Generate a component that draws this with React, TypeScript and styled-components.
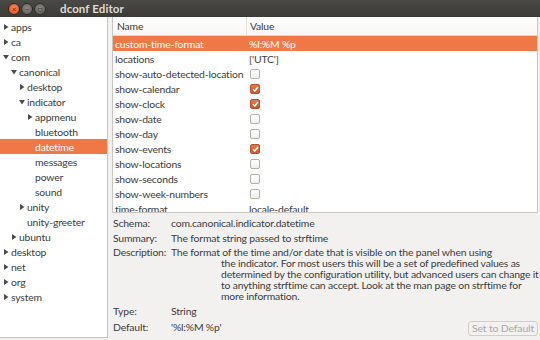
import React from "react";
import styled, { createGlobalStyle } from "styled-components";

const Global = createGlobalStyle`
  html, body { margin: 0; padding: 0; background: #f2f1f0; }
  body { font-family: Lato, "Liberation Sans", sans-serif; }
`;

const Window = styled.div`
  width: 540px;
  height: 340px;
  background: #f2f1f0;
  display: flex;
  flex-direction: column;
  overflow: hidden;
  font-family: Lato, "Liberation Sans", sans-serif;
  font-size: 10.4px;
  letter-spacing: -0.18px;
  color: #3c3c3c;
`;

const TitleBar = styled.div`
  height: 17px;
  flex: none;
  background: linear-gradient(#4a4945, #3c3b37);
  display: flex;
  align-items: center;
  padding-left: 8px;
  gap: 1px;
`;

const WinButton = styled.div<{ $close?: boolean }>`
  width: 10px;
  height: 10px;
  border-radius: 50%;
  background: ${(p) =>
    p.$close
      ? "radial-gradient(circle at 50% 40%, #f58a5f, #df4a16)"
      : "radial-gradient(circle at 50% 40%, #8a8882, #5d5b56)"};
  border: 0.5px solid #2c2b28;
  display: flex;
  align-items: center;
  justify-content: center;
  color: ${(p) => (p.$close ? "#5b1a05" : "#3c3b37")};
  font-size: 8px;
  line-height: 1;
`;

const Title = styled.div`
  margin-left: 13px;
  color: #dfdbd2;
  font-weight: bold;
  font-size: 11.5px;
  letter-spacing: 0.1px;
`;

const Body = styled.div`
  flex: 1;
  display: flex;
  gap: 4px;
  min-height: 0;
  padding: 0 2px 2px 0;
`;

const TreePanel = styled.div`
  width: 107px;
  flex: none;
  background: #ffffff;
  border-right: 1px solid #c9c6c1;
  border-bottom: 1px solid #c9c6c1;
  padding-top: 2px;
  overflow: hidden;
`;

const TreeRow = styled.div<{ $level: number; $selected?: boolean }>`
  height: 15px;
  display: flex;
  align-items: center;
  padding-left: ${(p) => 3 + p.$level * 8}px;
  background: ${(p) => (p.$selected ? "#f07746" : "transparent")};
  color: ${(p) => (p.$selected ? "#ffffff" : "#3c3c3c")};
  white-space: nowrap;
`;

const Expander = styled.span`
  width: 8px;
  flex: none;
  display: inline-flex;
  align-items: center;
`;

const RightColumn = styled.div`
  flex: 1;
  display: flex;
  flex-direction: column;
  min-width: 0;
`;

const TableBox = styled.div`
  height: 195px;
  flex: none;
  background: #ffffff;
  border: 1px solid #c9c6c1;
  border-top: none;
  overflow: hidden;
`;

const HeaderRow = styled.div`
  height: 18px;
  display: grid;
  grid-template-columns: 133px 1fr;
  border-bottom: 1px solid #dcdad5;
  background: linear-gradient(#ffffff, #f7f6f5);
`;

const HeaderCell = styled.div<{ $divider?: boolean }>`
  display: flex;
  align-items: center;
  padding-left: ${(p) => (p.$divider ? "3px" : "4px")};
  border-left: ${(p) => (p.$divider ? "1px solid #e2e0dc" : "none")};
  color: #3c3c3c;
`;

const Row = styled.div<{ $selected?: boolean }>`
  height: 15px;
  display: grid;
  grid-template-columns: 134px 1fr;
  align-items: center;
  background: ${(p) => (p.$selected ? "#f07746" : "transparent")};
  color: ${(p) => (p.$selected ? "#ffffff" : "#3c3c3c")};
  white-space: nowrap;
`;

const NameCell = styled.div`
  padding-left: 2px;
  overflow: hidden;
`;

const ValueCell = styled.div`
  padding-left: 2px;
  display: flex;
  align-items: center;
`;

const Check = styled.div<{ $on?: boolean }>`
  width: 8px;
  height: 8px;
  margin-left: 1px;
  border-radius: 2px;
  border: 1px solid ${(p) => (p.$on ? "#b5512c" : "#b4b0aa")};
  background: ${(p) =>
    p.$on ? "linear-gradient(#e2794e, #c95a30)" : "linear-gradient(#ffffff, #f0efed)"};
  display: flex;
  align-items: center;
  justify-content: center;
`;

const Details = styled.div`
  flex: 1;
  display: flex;
  flex-direction: column;
  padding: 2px 0 0 1px;
`;

const DetailRow = styled.div`
  display: grid;
  grid-template-columns: 58px 1fr auto;
  height: 15px;
  align-items: center;
  white-space: nowrap;
`;

const DescBlock = styled.div`
  display: grid;
  grid-template-columns: 58px 1fr;
  white-space: nowrap;
  padding: 2px 0 1px;
  line-height: 11px;
`;

const DescLines = styled.div`
  display: flex;
  flex-direction: column;
`;

const DescLine = styled.div<{ $indent?: boolean }>`
  height: 11px;
  padding-left: ${(p) => (p.$indent ? "50px" : "0")};
`;

const DefaultButton = styled.button`
  font-family: inherit;
  font-size: 10.4px;
  letter-spacing: -0.12px;
  color: #a9a7a3;
  background: #f2f1f0;
  border: 1px solid #d2cfca;
  border-radius: 3px;
  height: 15px;
  padding: 0 3px;
  line-height: 13px;
  align-self: start;
  margin-top: 3px;
`;

const Arrow = ({ open }: { open: boolean }) => (
  <svg width="6" height="6" viewBox="0 0 6 6">
    {open ? (
      <polygon points="0,1 6,1 3,5.5" fill="#4c4c4c" />
    ) : (
      <polygon points="1,0 5.5,3 1,6" fill="#4c4c4c" />
    )}
  </svg>
);

const CheckMark = () => (
  <svg width="7" height="6" viewBox="0 0 7 6">
    <path d="M1 3.2 L2.8 5 L6 1" stroke="#ffffff" strokeWidth="1.4" fill="none" />
  </svg>
);

type TreeItem = { label: string; level: number; arrow?: "open" | "closed"; selected?: boolean };

const tree: TreeItem[] = [
  { label: "apps", level: 0, arrow: "closed" },
  { label: "ca", level: 0, arrow: "closed" },
  { label: "com", level: 0, arrow: "open" },
  { label: "canonical", level: 1, arrow: "open" },
  { label: "desktop", level: 2, arrow: "closed" },
  { label: "indicator", level: 2, arrow: "open" },
  { label: "appmenu", level: 3, arrow: "closed" },
  { label: "bluetooth", level: 3 },
  { label: "datetime", level: 3, selected: true },
  { label: "messages", level: 3 },
  { label: "power", level: 3 },
  { label: "sound", level: 3 },
  { label: "unity", level: 2, arrow: "closed" },
  { label: "unity-greeter", level: 2 },
  { label: "ubuntu", level: 1, arrow: "closed" },
  { label: "desktop", level: 0, arrow: "closed" },
  { label: "net", level: 0, arrow: "closed" },
  { label: "org", level: 0, arrow: "closed" },
  { label: "system", level: 0, arrow: "closed" },
];

type KeyRow = { name: string; value?: string; check?: boolean; selected?: boolean };

const keys: KeyRow[] = [
  { name: "custom-time-format", value: "%l:%M %p", selected: true },
  { name: "locations", value: "['UTC']" },
  { name: "show-auto-detected-location", check: false },
  { name: "show-calendar", check: true },
  { name: "show-clock", check: true },
  { name: "show-date", check: false },
  { name: "show-day", check: false },
  { name: "show-events", check: true },
  { name: "show-locations", check: false },
  { name: "show-seconds", check: false },
  { name: "show-week-numbers", check: false },
  { name: "time-format", value: "locale-default" },
];

const desc = [
  "The format of the time and/or date that is visible on the panel when using",
  "the indicator.  For most users this will be a set of predefined values as",
  "determined by the configuration utility, but advanced users can change it",
  "to anything strftime can accept.  Look at the man page on strftime for",
  "more information.",
];

export default function App() {
  return (
    <Window>
      <Global />
      <TitleBar>
        <WinButton $close>×</WinButton>
        <WinButton>–</WinButton>
        <WinButton>□</WinButton>
        <Title>dconf Editor</Title>
      </TitleBar>
      <Body>
        <TreePanel>
          {tree.map((t, i) => (
            <TreeRow key={i} $level={t.level} $selected={t.selected}>
              <Expander>{t.arrow ? <Arrow open={t.arrow === "open"} /> : null}</Expander>
              {t.label}
            </TreeRow>
          ))}
        </TreePanel>
        <RightColumn>
          <TableBox>
            <HeaderRow>
              <HeaderCell>Name</HeaderCell>
              <HeaderCell $divider>Value</HeaderCell>
            </HeaderRow>
            {keys.map((k, i) => (
              <Row key={i} $selected={k.selected}>
                <NameCell>{k.name}</NameCell>
                <ValueCell>
                  {k.check === undefined ? (
                    k.value
                  ) : (
                    <Check $on={k.check}>{k.check ? <CheckMark /> : null}</Check>
                  )}
                </ValueCell>
              </Row>
            ))}
          </TableBox>
          <Details>
            <DetailRow>
              <div>Schema:</div>
              <div>com.canonical.indicator.datetime</div>
            </DetailRow>
            <DetailRow>
              <div>Summary:</div>
              <div>The format string passed to strftime</div>
            </DetailRow>
            <DescBlock>
              <div>Description:</div>
              <DescLines>
                {desc.map((d, i) => (
                  <DescLine key={i} $indent={i > 0}>
                    {d}
                  </DescLine>
                ))}
              </DescLines>
            </DescBlock>
            <DetailRow>
              <div>Type:</div>
              <div>String</div>
            </DetailRow>
            <DetailRow>
              <div>Default:</div>
              <div>'%l:%M %p'</div>
              <DefaultButton disabled>Set to Default</DefaultButton>
            </DetailRow>
          </Details>
        </RightColumn>
      </Body>
    </Window>
  );
}
